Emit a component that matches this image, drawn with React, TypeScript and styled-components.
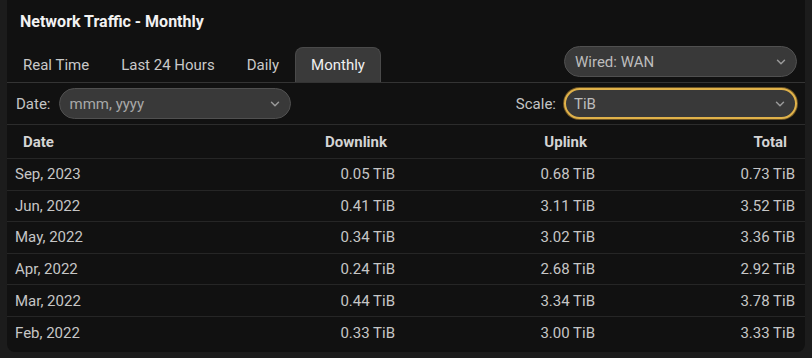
import React from "react";
import styled, { createGlobalStyle } from "styled-components";

const Global = createGlobalStyle`
  html, body { margin: 0; padding: 0; background: #1c1c1c; }
  body { font-family: Roboto, "Liberation Sans", sans-serif; }
  * { box-sizing: border-box; }
`;

const Panel = styled.div`
  margin: 0 7px;
  height: 352px;
  background: #111111;
  border-radius: 0 0 8px 8px;
  display: flex;
  flex-direction: column;
  overflow: hidden;
`;

const Title = styled.div`
  height: 44px;
  padding: 12px 13px 0;
  color: #f2f2f2;
  font-size: 16px;
  font-weight: 700;
`;

const TabBar = styled.div`
  height: 39px;
  display: flex;
  align-items: flex-end;
  justify-content: space-between;
  border-bottom: 1px solid #343434;
  padding-right: 8px;
`;

const Tabs = styled.div`
  display: flex;
  align-items: flex-end;
  height: 100%;
  margin-left: 0;
`;

const Tab = styled.div<{ $active?: boolean }>`
  height: 35px;
  padding: 0 15px 1px;
  display: flex;
  align-items: center;
  font-size: 15px;
  color: ${(p) => (p.$active ? "#f0f0f0" : "#c9c9c9")};
  background: ${(p) => (p.$active ? "#3a3a3a" : "transparent")};
  border: 1px solid ${(p) => (p.$active ? "#4a4a4a" : "transparent")};
  border-bottom: none;
  border-radius: 8px 8px 0 0;
`;

const Select = styled.div<{ $width: number; $focus?: boolean }>`
  width: ${(p) => p.$width}px;
  height: 31px;
  border-radius: 16px;
  background: #393939;
  border: ${(p) => (p.$focus ? "2px solid #e0b24a" : "1px solid #505050")};
  box-shadow: ${(p) => (p.$focus ? "0 0 0 1px #6e5524" : "none")};
  display: flex;
  align-items: center;
  justify-content: space-between;
  padding: 0 8px 0 ${(p) => (p.$focus ? "8px" : "10px")};
  color: #bdbdbd;
  font-size: 15px;
`;

const Placeholder = styled.span`
  color: #a8a8a8;
`;

const WanWrap = styled.div`
  margin-bottom: 5px;
`;

const FilterRow = styled.div`
  height: 42px;
  display: flex;
  align-items: center;
  justify-content: space-between;
  padding: 0 8px 0 9px;
  border-bottom: 1px solid #2c2c2c;
`;

const Field = styled.div`
  display: flex;
  align-items: center;
  gap: 8px;
`;

const Label = styled.span`
  color: #c4c4c4;
  font-size: 15px;
`;

const Table = styled.div`
  display: flex;
  flex-direction: column;
`;

const Row = styled.div<{ $head?: boolean }>`
  display: grid;
  grid-template-columns: 196px 200px 200px 200px;
  height: ${(p) => (p.$head ? "34px" : "31.6px")};
  align-items: center;
  border-bottom: 1px solid #262626;
  font-size: 15px;
  font-weight: ${(p) => (p.$head ? 700 : 400)};
  color: ${(p) => (p.$head ? "#d4d4d4" : "#c6c6c6")};
  &:last-child { border-bottom: none; }
`;

const Cell = styled.div<{ $right?: boolean; $head?: boolean }>`
  text-align: ${(p) => (p.$right ? "right" : "left")};
  padding: 0 ${(p) => (p.$head ? "16px" : "8px")};
  white-space: nowrap;
`;

const Chevron = () => (
  <svg width="14" height="14" viewBox="0 0 24 24" fill="none" stroke="#9a9a9a" strokeWidth="2.5" strokeLinecap="round" strokeLinejoin="round">
    <path d="m6 9 6 6 6-6" />
  </svg>
);

const rows = [
  ["Sep, 2023", "0.05 TiB", "0.68 TiB", "0.73 TiB"],
  ["Jun, 2022", "0.41 TiB", "3.11 TiB", "3.52 TiB"],
  ["May, 2022", "0.34 TiB", "3.02 TiB", "3.36 TiB"],
  ["Apr, 2022", "0.24 TiB", "2.68 TiB", "2.92 TiB"],
  ["Mar, 2022", "0.44 TiB", "3.34 TiB", "3.78 TiB"],
  ["Feb, 2022", "0.33 TiB", "3.00 TiB", "3.33 TiB"],
];

export default function App() {
  return (
    <>
      <Global />
      <Panel>
        <Title>Network Traffic - Monthly</Title>
        <TabBar>
          <Tabs>
            <Tab>Real Time</Tab>
            <Tab>Last 24 Hours</Tab>
            <Tab>Daily</Tab>
            <Tab $active>Monthly</Tab>
          </Tabs>
          <WanWrap>
            <Select $width={233}>
              <span>Wired: WAN</span>
              <Chevron />
            </Select>
          </WanWrap>
        </TabBar>
        <FilterRow>
          <Field>
            <Label>Date:</Label>
            <Select $width={232}>
              <Placeholder>mmm, yyyy</Placeholder>
              <Chevron />
            </Select>
          </Field>
          <Field>
            <Label>Scale:</Label>
            <Select $width={233} $focus>
              <span>TiB</span>
              <Chevron />
            </Select>
          </Field>
        </FilterRow>
        <Table>
          <Row $head>
            <Cell $head>Date</Cell>
            <Cell $head $right>Downlink</Cell>
            <Cell $head $right>Uplink</Cell>
            <Cell $head $right>Total</Cell>
          </Row>
          {rows.map((r) => (
            <Row key={r[0]}>
              <Cell>{r[0]}</Cell>
              <Cell $right>{r[1]}</Cell>
              <Cell $right>{r[2]}</Cell>
              <Cell $right>{r[3]}</Cell>
            </Row>
          ))}
        </Table>
      </Panel>
    </>
  );
}
